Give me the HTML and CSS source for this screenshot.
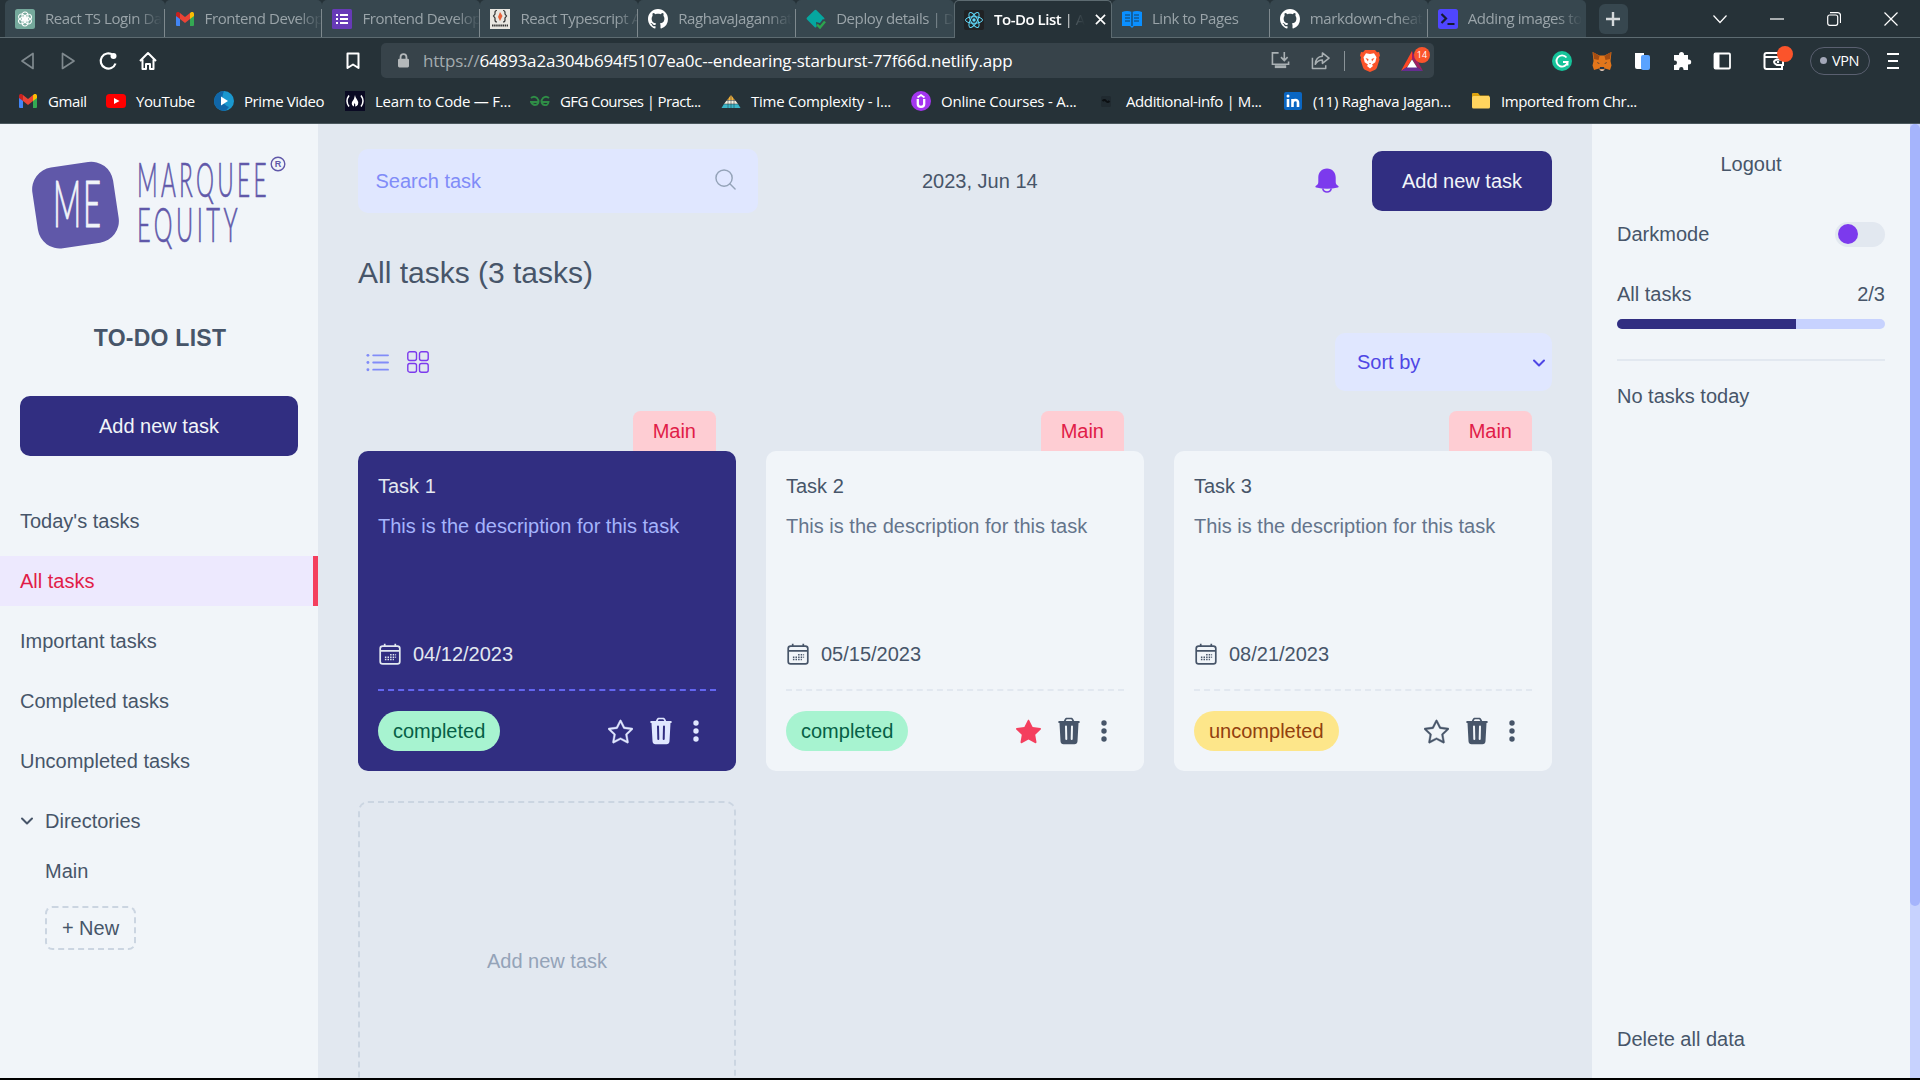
FILE: index.html
```html
<!DOCTYPE html>
<html lang="en">
<head>
<meta charset="utf-8">
<title>To-Do List</title>
<link rel="stylesheet" href="styles.css">
</head>
<body>
<svg class="defs" width="0" height="0" aria-hidden="true">
  <symbol id="github" viewBox="0 0 16 16"><path fill="#fff" d="M8 0C3.58 0 0 3.58 0 8c0 3.54 2.29 6.53 5.47 7.59.4.07.55-.17.55-.38 0-.19-.01-.82-.01-1.49-2.01.37-2.53-.49-2.69-.94-.09-.23-.48-.94-.82-1.13-.28-.15-.68-.52-.01-.53.63-.01 1.08.58 1.23.82.72 1.21 1.87.87 2.33.66.07-.52.28-.87.51-1.07-1.78-.2-3.64-.89-3.64-3.95 0-.87.31-1.59.82-2.15-.08-.2-.36-1.02.08-2.12 0 0 .67-.21 2.2.82.64-.18 1.32-.27 2-.27s1.36.09 2 .27c1.53-1.04 2.2-.82 2.2-.82.44 1.1.16 1.92.08 2.12.51.56.82 1.27.82 2.15 0 3.07-1.87 3.75-3.65 3.95.29.25.54.73.54 1.48 0 1.07-.01 1.93-.01 2.2 0 .21.15.46.55.38A8.01 8.01 0 0 0 16 8c0-4.42-3.58-8-8-8z"/></symbol>
  <symbol id="gmail" viewBox="0 0 20 20"><path fill="#4285f4" d="M1 5v11a1 1 0 0 0 1 1h3V8z"/><path fill="#34a853" d="M15 8v9h3a1 1 0 0 0 1-1V5z"/><path fill="#ea4335" d="M5 10V4l5 4 5-4v6l-5 4z"/><path fill="#c5221f" d="M1 5c0-2 2-2.500 3.300-1.500L5 4v6L1 7z"/><path fill="#fbbc04" d="M19 5c0-2-2-2.500-3.300-1.500L15 4v6l4-3z"/></symbol>
  <symbol id="star" viewBox="0 0 16 16"><path fill="currentColor" stroke="currentColor" stroke-width=".25" d="M2.866 14.850c-.078.444.360.791.746.593l4.390-2.256 4.389 2.256c.386.198.824-.149.746-.592l-.830-4.730 3.522-3.356c.330-.314.160-.888-.282-.950l-4.898-.696L8.465.792a.513.513 0 0 0-.927 0L5.354 5.120l-4.898.696c-.441.062-.612.636-.283.950l3.523 3.356-.830 4.730zm4.905-2.767-3.686 1.894.694-3.957a.560.560 0 0 0-.163-.505L1.710 6.745l4.052-.576a.530.530 0 0 0 .393-.288L8 2.223l1.847 3.658a.530.530 0 0 0 .393.288l4.052.575-2.906 2.770a.560.560 0 0 0-.163.506l.694 3.957-3.686-1.894a.500.500 0 0 0-.461 0z"/></symbol>
  <symbol id="star-fill" viewBox="0 0 16 16"><path fill="currentColor" d="M3.612 15.443c-.386.198-.824-.149-.746-.592l.830-4.730L.173 6.765c-.329-.314-.158-.888.283-.950l4.898-.696L7.538.792c.197-.390.730-.390.927 0l2.184 4.327 4.898.696c.441.062.612.636.282.950l-3.522 3.356.830 4.730c.078.443-.360.790-.746.592L8 13.187l-4.389 2.256z"/></symbol>
  <symbol id="trash" viewBox="0 0 24 28"><path fill="currentColor" d="M1.200 5.200c0-.9.500-1.200 1.200-1.200h4.400l1-1.900C8.300 1.100 9 .700 9.800.700h4.400c.8 0 1.500.4 2 1.400l1 1.900h4.400c.7 0 1.200.3 1.200 1.200 0 .5-.4.800-1 .8h-.3l-1 18.200c-.1 1.700-1.300 3-3 3h-11c-1.700 0-2.900-1.300-3-3L2.500 6h-.3c-.6 0-1-.3-1-.8zM8.700 4h6.600l-.7-1.300c-.2-.4-.4-.5-.8-.5h-3.600c-.4 0-.6.100-.8.500z"/><path stroke="var(--hole)" stroke-width="2" fill="none" stroke-linecap="round" d="M9 9.500l.3 12.500M15 9.500l-.3 12.500"/></symbol>
  <symbol id="dots" viewBox="0 0 6 22"><g fill="currentColor"><circle cx="3" cy="3" r="2.700"/><circle cx="3" cy="11" r="2.700"/><circle cx="3" cy="19" r="2.700"/></g></symbol>
  <symbol id="calendar" viewBox="0 0 22 22"><g fill="none" stroke="currentColor" stroke-width="1.700"><rect x="1.200" y="3.200" width="19.600" height="17.600" rx="2.400"/><path d="M1.200 7.800h19.600M5.700.800v2.600M16.300.800v2.600"/></g><g stroke="currentColor" stroke-width="1.500" stroke-dasharray="1.500 1.100"><path d="M11.100 11.800h6M5.900 14.200h11.200M5.900 16.600h9"/></g></symbol>
  <symbol id="chevron" viewBox="0 0 14 8"><path fill="none" stroke="currentColor" stroke-width="2" stroke-linecap="round" stroke-linejoin="round" d="M2 1.500l5 5 5-5"/></symbol>
</svg>

<header class="browser">
  <div class="tabstrip">
    <div class="tabs">
      <div class="tab"><svg class="fav" viewBox="0 0 20 20"><rect width="20" height="20" rx="2.500" fill="#75a99c"/><g fill="none" stroke="#fff" stroke-width="1.100"><ellipse cx="10" cy="7" rx="3" ry="4"/><ellipse cx="10" cy="7" rx="3" ry="4" transform="rotate(60 10 10)"/><ellipse cx="10" cy="7" rx="3" ry="4" transform="rotate(120 10 10)"/><ellipse cx="10" cy="7" rx="3" ry="4" transform="rotate(180 10 10)"/><ellipse cx="10" cy="7" rx="3" ry="4" transform="rotate(240 10 10)"/><ellipse cx="10" cy="7" rx="3" ry="4" transform="rotate(300 10 10)"/></g></svg><span class="tab-text">React TS Login Da</span></div>
      <div class="tab"><svg class="fav"><use href="#gmail"/></svg><span class="tab-text">Frontend Develop</span></div>
      <div class="tab"><svg class="fav" viewBox="0 0 20 20"><rect width="20" height="20" rx="1.500" fill="#673ab7"/><path stroke="#fff" stroke-width="2" d="M4 6h2M4 10h2M4 14h2M8 6h8M8 10h8M8 14h8"/></svg><span class="tab-text">Frontend Develop</span></div>
      <div class="tab"><svg class="fav" viewBox="0 0 20 20"><rect width="20" height="20" fill="#e8e6e1"/><path fill="none" stroke="#333" stroke-width="1.200" d="M7 1.500q-2 0-2 2v1.500l-1.500 2L5 9v2q0 2 2 2M13 1.500q2 0 2 2v1.500l1.500 2L15 9v2q0 2-2 2"/><path fill="#e8623a" d="M10 3l2.500 4L10 12 8 8z"/><path stroke="#333" stroke-width="2" stroke-dasharray="1.500 .6" d="M2 16.500h16"/></svg><span class="tab-text">React Typescript A</span></div>
      <div class="tab"><svg class="fav"><use href="#github"/></svg><span class="tab-text">RaghavaJagannat</span></div>
      <div class="tab before"><svg class="fav" viewBox="0 0 20 20"><path fill="#05a7a0" d="M8.500 1.200q1-1 2 0l7.500 7.500q1 1 0 2L10.500 18q-1 1-2 0L1 10.500q-1-1 0-2z"/><path d="M10 13l4 1 3-4 3 2v8h-9z" fill="#37474f"/><path fill="none" stroke="#2da44e" stroke-width="2.400" d="M11 15.500l3 3 5-6"/></svg><span class="tab-text">Deploy details | D</span></div>
      <div class="tab active"><svg class="fav" viewBox="0 0 20 20"><rect width="20" height="20" rx="2" fill="#202224"/><g fill="none" stroke="#61dafb"><ellipse cx="10" cy="10" rx="8.500" ry="3.300"/><ellipse cx="10" cy="10" rx="8.500" ry="3.300" transform="rotate(60 10 10)"/><ellipse cx="10" cy="10" rx="8.500" ry="3.300" transform="rotate(120 10 10)"/></g><circle cx="10" cy="10" r="1.700" fill="#61dafb"/></svg><span class="tab-text"><b>To-Do List |</b> A</span><svg class="tab-close" viewBox="0 0 12 12"><path stroke="#fff" stroke-width="1.800" d="M1 1l10 10M11 1L1 11"/></svg></div>
      <div class="tab"><svg class="fav" viewBox="0 0 20 20"><path fill="#0a8fff" d="M0 3q5-2 10 0 5-2 10 0v14h-8l-2 2-2-2H0z"/><path stroke="#16405f" stroke-width="1.200" d="M10 3v14M3 6h5M3 9h5M3 12h5M12 6h5M12 9h5M12 12h5"/></svg><span class="tab-text">Link to Pages</span></div>
      <div class="tab"><svg class="fav"><use href="#github"/></svg><span class="tab-text">markdown-cheat</span></div>
      <div class="tab last"><svg class="fav" viewBox="0 0 20 20"><rect width="20" height="20" rx="2.500" fill="#4f46ff"/><path fill="none" stroke="#161c33" stroke-width="2.200" d="M3.500 5l4.500 4.500-4.500 4.500M9.500 15h7"/></svg><span class="tab-text">Adding images to</span></div>
    </div>
    <div class="newtab"><svg width="16" height="16" viewBox="0 0 16 16"><path stroke="#d5d9db" stroke-width="2.400" d="M8 1v14M1 8h14"/></svg></div>
    <div class="window">
      <svg viewBox="0 0 14 14"><path d="M.5 3.500l6.500 7 6.500-7"/></svg>
      <svg viewBox="0 0 14 14"><path d="M0 7h14"/></svg>
      <svg viewBox="0 0 14 14"><rect x=".7" y="3" width="10" height="10.300" rx="2"/><path d="M3 .7h7.500q3 0 3 3V11"/></svg>
      <svg viewBox="0 0 14 14"><path d="M.5.500l13 13M13.500.500l-13 13"/></svg>
    </div>
  </div>

  <div class="navbar">
    <div class="nav-left">
      <svg viewBox="0 0 20 20"><path fill="none" stroke="#7f898e" stroke-width="1.700" stroke-linejoin="round" d="M15 2.500v15L4 10z"/></svg>
      <svg viewBox="0 0 20 20"><path fill="none" stroke="#7f898e" stroke-width="1.700" stroke-linejoin="round" d="M4.500 2.500v15L16 10z"/></svg>
      <svg viewBox="0 0 20 20"><path fill="none" stroke="#fff" stroke-width="2.200" d="M17.500 12.500A7.600 7.600 0 1 1 15 4"/><circle cx="15.500" cy="5" r="3" fill="#fff"/></svg>
      <svg viewBox="0 0 20 20"><path fill="none" stroke="#fff" stroke-width="2" stroke-linejoin="round" d="M2 10l8-8 8 8M4.500 8.500V18H8v-5h4v5h3.500V8.500"/></svg>
    </div>
    <svg class="bookmark" viewBox="0 0 14 18"><path fill="none" stroke="#fff" stroke-width="2" stroke-linejoin="round" d="M1.500 1.500h11V16L7 12.500 1.500 16z"/></svg>
    <div class="url">
      <svg class="lock" viewBox="0 0 12 16"><rect y="6" width="12" height="9.500" rx="1.500" fill="#b4b8ba"/><path fill="none" stroke="#b4b8ba" stroke-width="2" d="M2.800 7V4.200a3.200 3.200 0 0 1 6.400 0V7"/></svg>
      <span class="address"><i>https://</i>64893a2a304b694f5107ea0c--endearing-starburst-77f66d.netlify.app</span>
      <svg class="act" viewBox="0 0 20 20"><path fill="none" stroke="#a9b0b3" stroke-width="1.700" d="M8 2H1.500v12h17v-3M14 1v9M10.500 6.500L14 10l3.500-3.500"/><path fill="#a9b0b3" d="M4 15h12v3H4z"/></svg>
      <svg class="act share" viewBox="0 0 20 20"><path fill="none" stroke="#a9b0b3" stroke-width="1.600" stroke-linejoin="round" d="M1.500 7v11.500h14V15M12 2l7 5.500-7 5.500V9.500Q7 9.500 4.500 14 5 6 12 5.500z"/></svg>
      <span class="rule"></span>
      <svg class="brave" viewBox="0 0 20 22"><path fill="#fb542b" d="M5 0h10l2 2.200 2-.2 1 3.500-1 2 .5 2-2.500 8q-.5 1.500-1.800 2.300L10 22l-5.200-2.200Q3.500 19 3 17.500l-2.500-8 .5-2-1-2L1 2l2 .2z"/><path fill="#fff" d="M10 4l4-.8 2.500 4-1.200 5-3.300 2.200 1 1.600-3 2.500L7 16l1-1.600-3.300-2.200-1.200-5L6 3.200z"/><path fill="#fb542b" d="M5.500 8l3 1-.5 2.500zM14.500 8l-3 1 .5 2.500zM9 13h2l-1 1.500z"/></svg>
      <span class="bat"><svg viewBox="0 0 22 20"><path fill="#ff4724" d="M11 0L0 20l6-4 5-8z"/><path fill="#662d91" d="M0 20h22l-6-4H6z"/><path fill="#9e1f63" d="M11 0l11 20-6-4-5-8z"/><path fill="#fff" d="M11 8.500l5 8H6z"/></svg><em>14</em></span>
    </div>
    <div class="ext">
      <svg viewBox="0 0 20 20"><circle cx="10" cy="10" r="10" fill="#15c39a"/><path fill="none" stroke="#fff" stroke-width="1.900" d="M14.500 6.500A5.600 5.600 0 1 0 15.600 11H11M15.500 10.500v4"/></svg>
      <svg viewBox="0 0 20 20"><path fill="#e2761b" d="M.5 1l7 3.500h5L19.500 1l-1 9 1 4.500-1.500 4.500-5-1.500-1.500 1.500h-3L7 17.500 2 19 .5 14.500l1-4.500z"/><path fill="#a34c12" d="M1 1l6.500 4-1 4L2 8zM19 1l-6.500 4 1 4L18 8z"/><path fill="#233447" d="M5 11l3 1.500H6zM15 11l-3 1.500h2zM8 16h4l.5 2h-5z"/><path fill="#d7c1b3" d="M7 18.500h6l-2 1.500H9z"/></svg>
      <svg viewBox="0 0 20 20"><path fill="#fff" d="M3 2h9v16H5q-2 0-2-2z"/><rect x="9" y="4" width="9" height="15" rx="2" fill="#5aa3ff"/></svg>
      <svg viewBox="0 0 20 20"><path fill="#fff" d="M7 3.500a2.500 2.500 0 0 1 5 0V4h4v4.500h.7a2.500 2.500 0 0 1 0 5H16V19h-4.500v-.8a2.200 2.200 0 0 0-4.400 0v.8H2v-5h.7a2.300 2.300 0 0 0 0-4.600H2V4h5z"/></svg>
      <svg viewBox="0 0 20 20"><rect x="2.500" y="2.500" width="15.500" height="15" rx="1" fill="none" stroke="#fff" stroke-width="1.800"/><path fill="#fff" d="M3 3h4.500v14H3z"/></svg>
    </div>
    <span class="wallet"><svg viewBox="0 0 24 24"><path fill="none" stroke="#fff" stroke-width="2" d="M20 9V4H4.500Q2.500 4 2.500 6v12q0 2 2 2H20v-4M2.500 8H18q3 0 3 2v6h-6q-3-1.500-3-3t3-2.500h6"/><circle cx="16" cy="13" r="1.200" fill="#fff"/></svg><em></em></span>
    <span class="vpn"><i></i>VPN</span>
    <svg class="menu" viewBox="0 0 12 18"><path stroke="#fff" stroke-width="2" d="M0 2h12M1 9h10M0 16h12"/></svg>
  </div>

  <nav class="bookmarks">
    <span><svg><use href="#gmail"/></svg>Gmail</span>
    <span><svg viewBox="0 0 20 20"><rect y="3" width="20" height="14" rx="3.500" fill="#f00"/><path fill="#fff" d="M8 7l5.500 3L8 13z"/></svg>YouTube</span>
    <span><svg viewBox="0 0 20 20"><circle cx="10" cy="10" r="10" fill="#1a98cf"/><path fill="#1066a8" d="M10 0a10 10 0 0 0 0 20q3-1 5-4Q5 12 10 0z"/><path fill="#fff" d="M7 5.500l7 4.500-7 4.500z"/></svg>Prime Video</span>
    <span class="loose"><svg viewBox="0 0 20 20"><rect width="20" height="20" fill="#0a0a23"/><path fill="none" stroke="#fff" stroke-width="1.500" d="M4 4.500q-4 5.500 0 11M16 4.500q4 5.500 0 11"/><path fill="#fff" d="M10 4q0 2 2 4.500t1 5q-1 2-3 2 1-2-.5-3.500-.8 1.500-.5 3.500-3-1.500-2-4.500Q9.500 8 10 4z"/></svg>Learn to Code — F...</span>
    <span class="tight"><svg viewBox="0 0 20 20"><path fill="none" stroke="#2f8d46" stroke-width="1.900" d="M1 7q3-2.500 6 0 3 3.500 0 6.500-4 1.500-6-2.500h8M19 7q-3-2.500-6 0-3 3.500 0 6.500 5 2 5.500-2.500H11"/></svg>GFG Courses | Pract...</span>
    <span class="loose"><svg viewBox="0 0 20 20"><path fill="#f2b13c" d="M10 4l4 5H6z"/><path fill="#f5f0e0" d="M6 9h8l3 4H3z"/><path fill="#3bb6c8" d="M3 13h14l2.500 4H.500z"/><path stroke="#263238" stroke-width=".5" d="M5 9.500h10M3 13h14M7 6v11M10 4v13M13 6v11"/></svg>Time Complexity - I...</span>
    <span class="loose"><svg viewBox="0 0 20 20"><circle cx="10" cy="10" r="10" fill="#a435f0"/><path fill="none" stroke="#fff" stroke-width="2.300" d="M6.800 8v5q0 2.800 3.200 2.800t3.200-2.800V8"/><path fill="none" stroke="#fff" stroke-width="1.800" d="M6.500 6.500L10 4l3.500 2.500"/></svg>Online Courses - A...</span>
    <span><svg viewBox="0 0 20 20"><rect x="5" y="5" width="10" height="11" rx="1.500" fill="#202a30"/><path fill="none" stroke="#0b0f12" stroke-width="2" d="M6.500 10q2-2 3.500 0t3.500 0"/></svg>Additional-info | M...</span>
    <span class="loose"><svg viewBox="0 0 20 20"><rect x="1" y="1" width="18" height="18" rx="2" fill="#0a66c2"/><path stroke="#fff" stroke-width="2.600" fill="none" d="M5 8v8M9.500 16V8M9.500 12q0-3 2.800-3t2.700 3v4"/><circle cx="5" cy="5" r="1.500" fill="#fff"/></svg>(11) Raghava Jagan...</span>
    <span><svg viewBox="0 0 20 20"><path fill="#dba20f" d="M1 3q0-1 1-1h5l2 2.500h9v4H1z"/><rect x="1" y="5" width="18" height="12.500" rx="1.500" fill="#ffd45e"/></svg>Imported from Chr...</span>
  </nav>
</header>

<div class="app">
  <aside class="sidebar">
    <svg class="logo" viewBox="0 0 270 110">
      <rect x="14.700" y="24.300" width="81.600" height="81.600" rx="22" transform="rotate(-8.500 55.500 65)" fill="#6058a9"/>
      <text class="mark" x="33" y="86.500" textLength="50" lengthAdjust="spacingAndGlyphs">ME</text>
      <text class="word" x="117" y="56.700" textLength="133" lengthAdjust="spacingAndGlyphs">MARQUEE</text>
      <text class="word" x="117" y="102.300" textLength="104" lengthAdjust="spacingAndGlyphs">EQUITY</text>
      <circle cx="258" cy="24" r="6.800" fill="none" stroke="#6058a9" stroke-width="1.400"/>
      <text class="reg" x="258" y="27.300" text-anchor="middle">R</text>
    </svg>
    <h1>To-do list</h1>
    <button class="btn">Add new task</button>
    <ul class="menu-list">
      <li>Today's tasks</li>
      <li class="current">All tasks</li>
      <li>Important tasks</li>
      <li>Completed tasks</li>
      <li>Uncompleted tasks</li>
      <li class="dir"><svg><use href="#chevron"/></svg>Directories</li>
    </ul>
    <div class="dirs"><p>Main</p><button class="new">+ New</button></div>
  </aside>

  <main>
    <div class="top">
      <div class="search"><span>Search task</span><svg viewBox="0 0 22 22"><g fill="none" stroke="#94a3b8" stroke-width="1.500" stroke-linecap="round"><circle cx="9.500" cy="9.500" r="8.500"/><path d="M15.500 15.500l5.500 5.500"/></g></svg></div>
      <time>2023, Jun 14</time>
      <svg class="bell" viewBox="0 0 24 26"><path fill="#7c3aed" d="M12 .5c5.500 0 8.700 4 8.700 9v4.500c0 1.800.8 2.700 2.300 3.800 1 .8.700 1.500-.2 1.700-7 1.800-14.600 1.800-21.600 0-.9-.2-1.200-.9-.2-1.700 1.500-1.100 2.300-2 2.300-3.800V9.500c0-5 3.200-9 8.700-9z"/><path fill="none" stroke="#7c3aed" stroke-width="1.500" d="M7.700 20.500a4.400 4.400 0 0 0 8.600 0"/></svg>
      <button class="btn">Add new task</button>
    </div>
    <h2>All tasks (3 tasks)</h2>
    <div class="tools">
      <svg class="view-list" viewBox="0 0 24 24"><path fill="none" stroke="#818cf8" stroke-width="1.900" stroke-linecap="round" d="M7.500 4.500h15.500M7.500 12h15.500M7.500 19.500h15.500"/><g fill="#818cf8"><circle cx="2" cy="4.500" r="1.500"/><circle cx="2" cy="12" r="1.500"/><circle cx="2" cy="19.500" r="1.500"/></g></svg>
      <svg class="view-grid" viewBox="0 0 22 22"><g fill="none" stroke="#7c3aed" stroke-width="1.400"><rect x=".8" y=".8" width="8.700" height="8.700" rx="2"/><rect x="12.500" y=".8" width="8.700" height="8.700" rx="2"/><rect x=".8" y="12.500" width="8.700" height="8.700" rx="2"/><rect x="12.500" y="12.500" width="8.700" height="8.700" rx="2"/></g></svg>
      <div class="sort">Sort by<svg><use href="#chevron"/></svg></div>
    </div>
    <ul class="cards">
      <li><span class="tag">Main</span>
        <article class="card dark"><h3>Task 1</h3><p>This is the description for this task</p>
          <div class="date"><svg><use href="#calendar"/></svg>04/12/2023</div>
          <footer><span class="pill done">completed</span><svg class="star"><use href="#star"/></svg><svg class="trash"><use href="#trash"/></svg><svg class="dots"><use href="#dots"/></svg></footer></article></li>
      <li><span class="tag">Main</span>
        <article class="card"><h3>Task 2</h3><p>This is the description for this task</p>
          <div class="date"><svg><use href="#calendar"/></svg>05/15/2023</div>
          <footer><span class="pill done">completed</span><svg class="star marked"><use href="#star-fill"/></svg><svg class="trash"><use href="#trash"/></svg><svg class="dots"><use href="#dots"/></svg></footer></article></li>
      <li><span class="tag">Main</span>
        <article class="card"><h3>Task 3</h3><p>This is the description for this task</p>
          <div class="date"><svg><use href="#calendar"/></svg>08/21/2023</div>
          <footer><span class="pill todo">uncompleted</span><svg class="star"><use href="#star"/></svg><svg class="trash"><use href="#trash"/></svg><svg class="dots"><use href="#dots"/></svg></footer></article></li>
      <li class="add">Add new task</li>
    </ul>
  </main>

  <aside class="account">
    <button class="logout">Logout</button>
    <div class="row dm">Darkmode<span class="toggle"><i></i></span></div>
    <div class="row all">All tasks<span>2/3</span></div>
    <div class="bar"><i style="width:66.67%"></i></div>
    <p class="today">No tasks today</p>
    <button class="delete">Delete all data</button>
  </aside>
  <div class="scroll"><i></i></div>
</div>
</body>
</html>
```
FILE: styles.css
```css
* { box-sizing: border-box; margin: 0; padding: 0; }
html, body { width: 1920px; height: 1080px; overflow: hidden; }
body { background: #000; font: 20px/30px "Liberation Sans", Arial, sans-serif; color: #475569; }
button { font: inherit; color: inherit; background: none; border: 0; }
ul { list-style: none; }
i, em { font-style: normal; }
svg { display: block; flex: none; }
.defs { position: absolute; }

/* browser frame */
.browser { height: 124px; background: #263238; border-bottom: 1px solid #4b585e; font-family: "Open Sans", "Noto Sans", sans-serif; color: #fff; }
.tabstrip { height: 38px; display: flex; padding-left: 5px; border-bottom: 1px solid #5d6b71; }
.tabs { display: grid; grid-template-columns: 159.600px repeat(9, 157.900px); height: 38px; }
.tab { position: relative; display: flex; align-items: center; gap: 10px; height: 37px; padding: 0 5px 0 10px; background: #37474f; color: #9aa4a9; border-radius: 5px 5px 0 0; font-size: 15px; letter-spacing: -.42px; white-space: nowrap; }
.tab::after { content: ""; position: absolute; right: 0; top: 9px; bottom: 0; width: 1px; background: #7e898e; }
.tab.before::after, .tab.active::after, .tab.last::after { display: none; }
.fav { width: 20px; height: 20px; }
.tab-text { flex: 1; line-height: 30px; padding-bottom: 2px; -webkit-mask-image: linear-gradient(90deg, #000 calc(100% - 26px), transparent); mask-image: linear-gradient(90deg, #000 calc(100% - 26px), transparent); }
.tab.active { height: 38px; padding-left: 9px; background: #263238; border: 1px solid #5d6b71; border-bottom: 0; }
.tab.active b { color: #fff; font-weight: 600; letter-spacing: -.5px; }
.tab-close { width: 11px; height: 11px; margin-right: 2px; }
.newtab { width: 29px; height: 30px; margin: 4px 0 0 13px; border-radius: 6px; background: #37474f; display: grid; place-items: center; }
.window { margin: 12px 22px 0 auto; display: flex; gap: 43px; }
.window svg { width: 14px; height: 14px; fill: none; stroke: #fff; stroke-width: 1.2; }

.navbar { height: 45px; display: flex; align-items: center; }
.nav-left { display: flex; gap: 20px; margin-left: 18px; }
.nav-left svg, .ext svg { width: 20px; height: 20px; }
.bookmark { width: 14px; height: 18px; margin-left: 188px; }
.url { width: 1053px; height: 35px; margin-left: 21px; padding-left: 17px; display: flex; align-items: center; background: #37434a; border-radius: 5px; }
.lock { width: 11px; height: 15px; margin-right: 14px; }
.address { width: 848px; font-size: 17px; letter-spacing: -.19px; white-space: nowrap; }
.address i { color: #a3abaf; }
.act { width: 19px; height: 19px; }
.share { margin-left: 21px; }
.rule { width: 1px; height: 20px; margin: 0 15px 0 14px; background: #8a9398; }
.brave { width: 20px; height: 22px; }
.bat { position: relative; margin-left: 21px; }
.bat svg { width: 22px; height: 20px; }
.bat em { position: absolute; left: 13px; top: -4px; width: 16px; height: 16px; border-radius: 8px; background: #fb542b; font-size: 9px; line-height: 16px; text-align: center; }
.ext { display: flex; gap: 20px; margin-left: 118px; }
.wallet { position: relative; margin-left: 30px; }
.wallet svg { width: 24px; height: 24px; }
.wallet em { position: absolute; left: 15px; top: -3px; width: 16px; height: 16px; border-radius: 8px; background: #fb542b; }
.vpn { width: 60px; height: 28px; margin-left: 24px; border: 1px solid #5a6070; border-radius: 14px; display: flex; align-items: center; gap: 5px; padding-left: 9px; font-size: 14.500px; letter-spacing: -.4px; }
.vpn i { width: 7px; height: 7px; border-radius: 4px; background: #a3a7b8; }
.menu { width: 12px; height: 18px; margin-left: 17px; }

.bookmarks { height: 35px; padding-left: 18px; display: grid; grid-template-columns: 88px 108px 131px 185px 191px 190px 185px 187px 188px 180px; align-items: center; font-size: 15px; letter-spacing: -.4px; }
.bookmarks span { display: flex; align-items: center; gap: 10px; white-space: nowrap; line-height: 28px; }
.bookmarks svg { width: 20px; height: 20px; }
.bookmarks .loose { letter-spacing: -.23px; }
.bookmarks .tight { letter-spacing: -.6px; }

/* application */
.app { height: 954px; display: flex; background: #e2e8f0; overflow: hidden; }
.btn { height: 60px; border-radius: 10px; background: #312e81; color: #f1f5f9; }

.sidebar { width: 318px; background: #f1f5f9; display: flex; flex-direction: column; }
.logo { width: 270px; height: 110px; margin: 16px 0 0 20px; }
.mark, .word { font-family: Lato, sans-serif; font-weight: 300; }
.mark { font-size: 65px; letter-spacing: 4px; fill: #f1f5f9; stroke: #f1f5f9; stroke-width: 1px; }
.word { font-size: 48px; letter-spacing: 7px; fill: #6058a9; stroke: #6058a9; stroke-width: .7px; }
.reg { font-family: "Liberation Sans", Arial, sans-serif; font-weight: 700; font-size: 9px; fill: #6058a9; }
.sidebar h1 { margin: 73px 0 43px 2px; font-size: 23px; line-height: 30px; letter-spacing: .25px; text-transform: uppercase; text-align: center; }
.sidebar .btn { margin: 0 20px 40px; flex: none; }
.menu-list { display: flex; flex-direction: column; gap: 10px; }
.menu-list li { height: 50px; padding-left: 20px; display: flex; align-items: center; }
.menu-list .current { background: #ede9fe; color: #e11d48; border-right: 5px solid #f43f5e; }
.dir svg { width: 14px; height: 8px; margin-right: 11px; }
.dirs { padding: 10px 0 0 45px; }
.dirs p { margin-bottom: 20px; }
.new { width: 91px; height: 44px; border: 2px dashed #cbd5e1; border-radius: 7.500px; }

main { width: 1274px; padding: 25px 40px 0; }
.top { height: 64px; display: flex; align-items: center; }
.search { width: 400px; height: 64px; padding: 0 22px 0 17.500px; display: flex; align-items: center; justify-content: space-between; background: #e0e7ff; border-radius: 10px; color: #818cf8; }
.search svg { width: 21px; height: 21px; margin-top: -3px; }
.top time { margin-left: 164px; flex: 1; }
.bell { width: 24px; height: 26px; margin-right: 33px; }
.top .btn { width: 180px; }
main h2 { margin: 37px 0 38px; font-size: 30px; line-height: 45px; font-weight: 400; }
.tools { height: 58px; display: flex; align-items: center; padding-left: 8px; }
.view-list { width: 23px; height: 23px; }
.view-grid { width: 22px; height: 22px; margin-left: 18px; }
.sort { width: 217px; height: 58px; margin-left: auto; padding: 0 6px 0 22px; display: flex; align-items: center; justify-content: space-between; background: #e0e7ff; border-radius: 10px; color: #4f46e5; }
.sort svg { width: 14px; height: 8px; margin-top: 1px; }

.cards { margin-top: 20px; display: grid; grid-template-columns: repeat(3, 1fr); gap: 30px; }
.cards li { display: flex; flex-direction: column; }
.tag { align-self: flex-end; height: 40px; margin-right: 20px; padding: 5px 20px; background: #fecdd3; color: #e11d48; border-radius: 7.500px 7.500px 0 0; }
.card { --hole: #f1f5f9; height: 320px; padding: 20px; display: flex; flex-direction: column; background: #f1f5f9; border-radius: 10px; }
.card h3 { font-size: 20px; font-weight: 400; }
.card p { margin-top: 10px; color: #64748b; }
.date { margin-top: auto; height: 30px; display: flex; align-items: center; gap: 12px; padding-left: 1px; }
.date svg { width: 22px; height: 22px; }
.card footer { height: 62px; margin-top: 20px; padding-top: 20px; display: flex; align-items: center; border-top: 2px dashed #e2e8f0; }
.pill { height: 40px; margin-right: auto; padding: 5px 15px; border-radius: 20px; }
.done { background: #a7f3d0; color: #065f46; }
.todo { background: #fde68a; color: #92400e; }
.star { width: 25px; height: 25px; margin-right: 16px; }
.marked { color: #f43f5e; }
.trash { width: 24px; height: 28px; margin-right: 20px; }
.dots { width: 6px; height: 22px; margin-right: 17px; }
.dark { --hole: #312e81; background: #312e81; color: #e0e7ff; }
.dark h3, .dark .date { color: #e2e8f0; }
.dark p { color: #a5b4fc; }
.dark footer { border-color: #6366f1; }
.cards .add { height: 320px; align-items: center; justify-content: center; border: 2px dashed #cbd5e1; border-radius: 10px; color: #94a3b8; }

.account { width: 318px; padding: 25px; background: #f1f5f9; display: flex; flex-direction: column; }
.logout { align-self: center; }
.row { display: flex; justify-content: space-between; align-items: center; }
.dm { margin-top: 40px; }
.toggle { width: 50px; height: 25px; padding: 2px 3px; background: #e2e8f0; border-radius: 13px; }
.toggle i { display: block; width: 20px; height: 20px; border-radius: 10px; background: #7c3aed; }
.all { margin-top: 30px; }
.bar { height: 10px; margin-top: 10px; border-radius: 5px; background: #c7d2fe; overflow: hidden; }
.bar i { display: block; height: 10px; background: #312e81; }
.today { margin-top: 30px; padding-top: 20px; border-top: 2px solid #e2e8f0; }
.delete { margin-top: auto; margin-bottom: -1px; align-self: flex-start; }
.scroll { width: 10px; background: #c7d2fe; }
.scroll i { display: block; width: 10px; height: 782px; border-radius: 5px; background: #a5b4fc; }
```
